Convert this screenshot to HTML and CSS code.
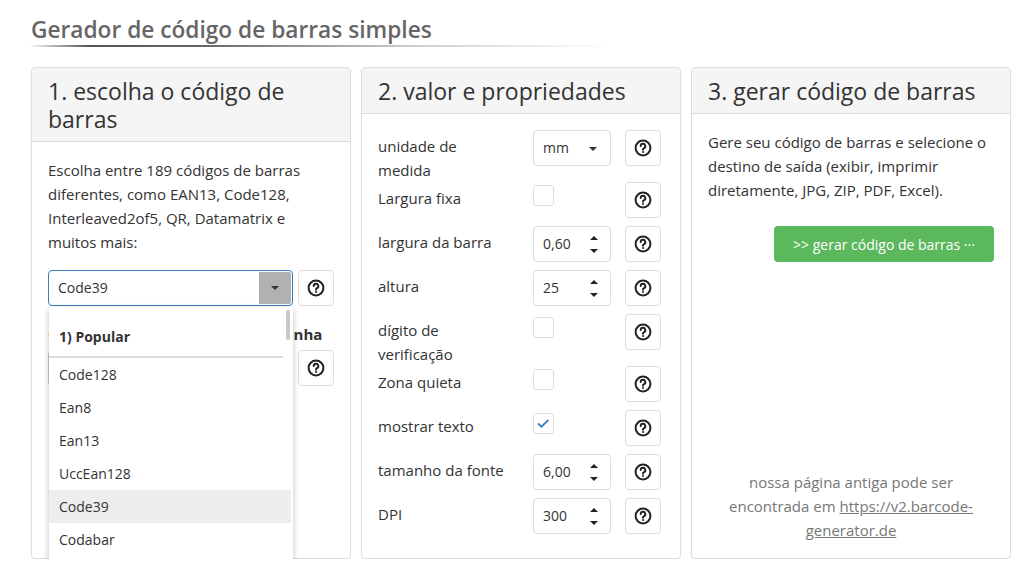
FILE: index.html
```html
<!DOCTYPE html>
<html lang="pt">
<head>
    <meta charset="UTF-8">
    <meta name="viewport" content="width=device-width, initial-scale=1.0">
    <title>Gerador de código de barras simples</title>
    <link rel="stylesheet" href="styles.css">
</head>
<body>
<div class="container">
    <h1 class="page-title">Gerador de código de barras simples</h1>
    <div class="title-line"></div>

    <div class="panels">
        <!-- 1. tipo de código -->
        <div class="panel">
            <div class="panel-heading">1. escolha o código de barras</div>
            <div class="panel-body">
                <p class="intro">Escolha entre 189 códigos de barras diferentes, como EAN13, Code128, Interleaved2of5, QR, Datamatrix e muitos mais:</p>
                <div class="field-row">
                    <div class="combo">
                        <div class="combo-box focused">
                            <span>Code39</span>
                            <span class="combo-arrow"><i class="caret"></i></span>
                        </div>
                        <div class="dropdown">
                            <div class="dd-group">1) Popular</div>
                            <div class="dd-item">Code128</div>
                            <div class="dd-item">Ean8</div>
                            <div class="dd-item">Ean13</div>
                            <div class="dd-item">UccEan128</div>
                            <div class="dd-item active">Code39</div>
                            <div class="dd-item">Codabar</div>
                            <div class="dd-item">Interleaved2of5</div>
                            <div class="dd-item">Pdf417</div>
                            <div class="dd-thumb"></div>
                        </div>
                    </div>
                    <button class="help-btn"><svg class="help-icon" viewBox="0 0 18 18"><circle cx="9" cy="9" r="7.4"/><path d="M6.7 7.1a2.3 2.3 0 1 1 3.3 2.1c-.7.35-1 .8-1 1.6"/><circle class="dot" cx="9" cy="12.9" r="1"/></svg></button>
                </div>
                <div class="sub-label">Opções do código de barras em linha</div>
                <div class="field-row">
                    <div class="combo-box"><span>Padrão</span></div>
                    <button class="help-btn"><svg class="help-icon" viewBox="0 0 18 18"><circle cx="9" cy="9" r="7.4"/><path d="M6.7 7.1a2.3 2.3 0 1 1 3.3 2.1c-.7.35-1 .8-1 1.6"/><circle class="dot" cx="9" cy="12.9" r="1"/></svg></button>
                </div>
            </div>
        </div>

        <!-- 2. propriedades -->
        <div class="panel">
            <div class="panel-heading">2. valor e propriedades</div>
            <div class="panel-body">
                <div class="prop-row">
                    <div class="prop-label">unidade de medida</div>
                    <div class="prop-control"><div class="input select">mm<i class="caret"></i></div></div>
                    <button class="help-btn"><svg class="help-icon" viewBox="0 0 18 18"><circle cx="9" cy="9" r="7.4"/><path d="M6.7 7.1a2.3 2.3 0 1 1 3.3 2.1c-.7.35-1 .8-1 1.6"/><circle class="dot" cx="9" cy="12.9" r="1"/></svg></button>
                </div>
                <div class="prop-row">
                    <div class="prop-label">Largura fixa</div>
                    <div class="prop-control"><span class="checkbox"></span></div>
                    <button class="help-btn"><svg class="help-icon" viewBox="0 0 18 18"><circle cx="9" cy="9" r="7.4"/><path d="M6.7 7.1a2.3 2.3 0 1 1 3.3 2.1c-.7.35-1 .8-1 1.6"/><circle class="dot" cx="9" cy="12.9" r="1"/></svg></button>
                </div>
                <div class="prop-row">
                    <div class="prop-label">largura da barra</div>
                    <div class="prop-control"><div class="input number">0,60<span class="spin"><i class="up"></i><i class="down"></i></span></div></div>
                    <button class="help-btn"><svg class="help-icon" viewBox="0 0 18 18"><circle cx="9" cy="9" r="7.4"/><path d="M6.7 7.1a2.3 2.3 0 1 1 3.3 2.1c-.7.35-1 .8-1 1.6"/><circle class="dot" cx="9" cy="12.9" r="1"/></svg></button>
                </div>
                <div class="prop-row">
                    <div class="prop-label">altura</div>
                    <div class="prop-control"><div class="input number">25<span class="spin"><i class="up"></i><i class="down"></i></span></div></div>
                    <button class="help-btn"><svg class="help-icon" viewBox="0 0 18 18"><circle cx="9" cy="9" r="7.4"/><path d="M6.7 7.1a2.3 2.3 0 1 1 3.3 2.1c-.7.35-1 .8-1 1.6"/><circle class="dot" cx="9" cy="12.9" r="1"/></svg></button>
                </div>
                <div class="prop-row">
                    <div class="prop-label">dígito de verificação</div>
                    <div class="prop-control"><span class="checkbox"></span></div>
                    <button class="help-btn"><svg class="help-icon" viewBox="0 0 18 18"><circle cx="9" cy="9" r="7.4"/><path d="M6.7 7.1a2.3 2.3 0 1 1 3.3 2.1c-.7.35-1 .8-1 1.6"/><circle class="dot" cx="9" cy="12.9" r="1"/></svg></button>
                </div>
                <div class="prop-row">
                    <div class="prop-label">Zona quieta</div>
                    <div class="prop-control"><span class="checkbox"></span></div>
                    <button class="help-btn"><svg class="help-icon" viewBox="0 0 18 18"><circle cx="9" cy="9" r="7.4"/><path d="M6.7 7.1a2.3 2.3 0 1 1 3.3 2.1c-.7.35-1 .8-1 1.6"/><circle class="dot" cx="9" cy="12.9" r="1"/></svg></button>
                </div>
                <div class="prop-row">
                    <div class="prop-label">mostrar texto</div>
                    <div class="prop-control"><span class="checkbox checked"><svg viewBox="0 0 21 21"><path d="M4.5 10.5l3.8 3.6L16 6.5"/></svg></span></div>
                    <button class="help-btn"><svg class="help-icon" viewBox="0 0 18 18"><circle cx="9" cy="9" r="7.4"/><path d="M6.7 7.1a2.3 2.3 0 1 1 3.3 2.1c-.7.35-1 .8-1 1.6"/><circle class="dot" cx="9" cy="12.9" r="1"/></svg></button>
                </div>
                <div class="prop-row">
                    <div class="prop-label">tamanho da fonte</div>
                    <div class="prop-control"><div class="input number">6,00<span class="spin"><i class="up"></i><i class="down"></i></span></div></div>
                    <button class="help-btn"><svg class="help-icon" viewBox="0 0 18 18"><circle cx="9" cy="9" r="7.4"/><path d="M6.7 7.1a2.3 2.3 0 1 1 3.3 2.1c-.7.35-1 .8-1 1.6"/><circle class="dot" cx="9" cy="12.9" r="1"/></svg></button>
                </div>
                <div class="prop-row">
                    <div class="prop-label">DPI</div>
                    <div class="prop-control"><div class="input number">300<span class="spin"><i class="up"></i><i class="down"></i></span></div></div>
                    <button class="help-btn"><svg class="help-icon" viewBox="0 0 18 18"><circle cx="9" cy="9" r="7.4"/><path d="M6.7 7.1a2.3 2.3 0 1 1 3.3 2.1c-.7.35-1 .8-1 1.6"/><circle class="dot" cx="9" cy="12.9" r="1"/></svg></button>
                </div>
            </div>
        </div>

        <!-- 3. gerar -->
        <div class="panel">
            <div class="panel-heading">3. gerar código de barras</div>
            <div class="panel-body">
                <p class="intro">Gere seu código de barras e selecione o destino de saída (exibir, imprimir diretamente, JPG, ZIP, PDF, Excel).</p>
                <button class="btn-generate">&gt;&gt; gerar código de barras ···</button>
                <p class="old-page">nossa página antiga pode ser encontrada em <a href="#">https://v2.barcode-generator.de</a></p>
            </div>
        </div>
    </div>
</div>
</body>
</html>
```

FILE: styles.css
```css
body {
    margin: 0;
    font-family: "Open Sans", "Noto Sans", sans-serif;
    font-size: 15px;
    color: #333;
    background: #fff;
}
.container {
    width: 980px;
    margin-left: 31px;
}
.page-title {
    margin: 0;
    padding-top: 15px;
    font-size: 22.7px;
    font-weight: 600;
    line-height: 30px;
    color: #666;
}
.title-line {
    width: 580px;
    height: 2px;
    background: linear-gradient(to right, #f4f4f4 0%, #555 10%, #666 30%, #ccc 65%, rgba(255,255,255,0) 100%);
}
.panels {
    display: flex;
    gap: 10px;
    margin-top: 20px;
}
.panel {
    width: 320px;
    box-sizing: border-box;
    border: 1px solid #ddd;
    border-radius: 4px;
    box-shadow: 0 1px 2px rgba(0,0,0,0.06);
    display: flex;
    flex-direction: column;
}
.panel-heading {
    background: #f5f5f5;
    border-bottom: 1px solid #ddd;
    border-radius: 4px 4px 0 0;
    padding: 9px 16px 8px;
    font-size: 23px;
    line-height: 28px;
    color: #333;
}
.panel-body {
    flex: 1;
    padding: 16px;
    display: flex;
    flex-direction: column;
    line-height: 24px;
}
.intro {
    margin: 0 0 16px;
}

/* campos */
.field-row {
    display: flex;
    gap: 5px;
}
.combo {
    position: relative;
    width: 245px;
}
.combo-box {
    width: 245px;
    height: 36px;
    box-sizing: border-box;
    border: 1px solid #ccc;
    border-radius: 4px;
    display: flex;
    align-items: center;
    padding-left: 9px;
    font-size: 14px;
    position: relative;
}
.combo-box.focused {
    border-color: #3b7ebd;
}
.combo-arrow {
    position: absolute;
    top: 1px;
    right: 1px;
    width: 32px;
    height: 32px;
    background: #b1b1b1;
    border-radius: 0 2px 2px 0;
    display: flex;
    align-items: center;
    justify-content: center;
}
.caret {
    display: inline-block;
    width: 0;
    height: 0;
    border-left: 4px solid transparent;
    border-right: 4px solid transparent;
    border-top: 4px solid #333;
}
.sub-label {
    margin: 16px 0 4px;
    font-weight: 700;
    white-space: nowrap;
}
.dropdown {
    position: absolute;
    top: 37px;
    left: 1px;
    width: 244px;
    height: 280px;
    overflow: hidden;
    background: #fff;
    border-radius: 3px;
    box-shadow: 0 2px 6px rgba(0,0,0,0.25);
    font-size: 14px;
    z-index: 5;
}
.dd-group {
    padding: 18px 10px 7px;
    font-weight: 700;
    border-bottom: 2px solid #ddd;
    margin-right: 10px;
}
.dd-item {
    height: 33px;
    line-height: 33px;
    padding-left: 10px;
    margin-right: 2px;
}
.dd-item.active {
    background: #eee;
}
.dd-thumb {
    position: absolute;
    top: 3px;
    right: 3px;
    width: 4px;
    height: 30px;
    background: #c8c8c8;
    border-radius: 2px;
}
.help-btn {
    width: 36px;
    height: 36px;
    flex: none;
    padding: 0;
    background: #fff;
    border: 1px solid #ddd;
    border-radius: 4px;
    display: flex;
    align-items: center;
    justify-content: center;
}
.help-icon {
    width: 18px;
    height: 18px;
    fill: none;
    stroke: #222;
    stroke-width: 2;
    stroke-linecap: round;
}
.help-icon .dot {
    fill: #222;
    stroke: none;
}

/* propriedades */
.prop-row {
    display: flex;
    align-items: flex-start;
}
.prop-label {
    width: 130px;
    padding-right: 25px;
    flex: none;
    padding-top: 4px;
}
.prop-control {
    width: 78px;
    margin-right: 14px;
    margin-bottom: 8px;
    flex: none;
}
.prop-row .help-btn {
    margin-bottom: 8px;
}
.input {
    height: 36px;
    box-sizing: border-box;
    border: 1px solid #ddd;
    border-radius: 4px;
    padding-left: 9px;
    font-size: 14px;
    display: flex;
    align-items: center;
    position: relative;
}
.input.select .caret {
    position: absolute;
    right: 13px;
    top: 16px;
}
.spin {
    position: absolute;
    right: 12px;
    top: 9px;
}
.spin i {
    display: block;
    width: 0;
    height: 0;
    border-left: 4px solid transparent;
    border-right: 4px solid transparent;
}
.spin .up {
    border-bottom: 4px solid #222;
    margin-bottom: 9px;
}
.spin .down {
    border-top: 4px solid #222;
}
.checkbox {
    display: block;
    width: 21px;
    height: 21px;
    box-sizing: border-box;
    margin-top: 3px;
    border: 1px solid #ddd;
    border-radius: 3px;
}
.checkbox svg {
    display: block;
    width: 19px;
    height: 19px;
    fill: none;
    stroke: #3b7ebd;
    stroke-width: 2;
}

/* gerar */
.btn-generate {
    align-self: flex-end;
    width: 220px;
    height: 36px;
    border: none;
    border-radius: 4px;
    background: #5cb85c;
    color: #fff;
    font-family: inherit;
    font-size: 14px;
    margin-top: 8px;
}
.old-page {
    margin: auto 0 0;
    text-align: center;
    color: #777;
}
.old-page a {
    color: #777;
}
```
